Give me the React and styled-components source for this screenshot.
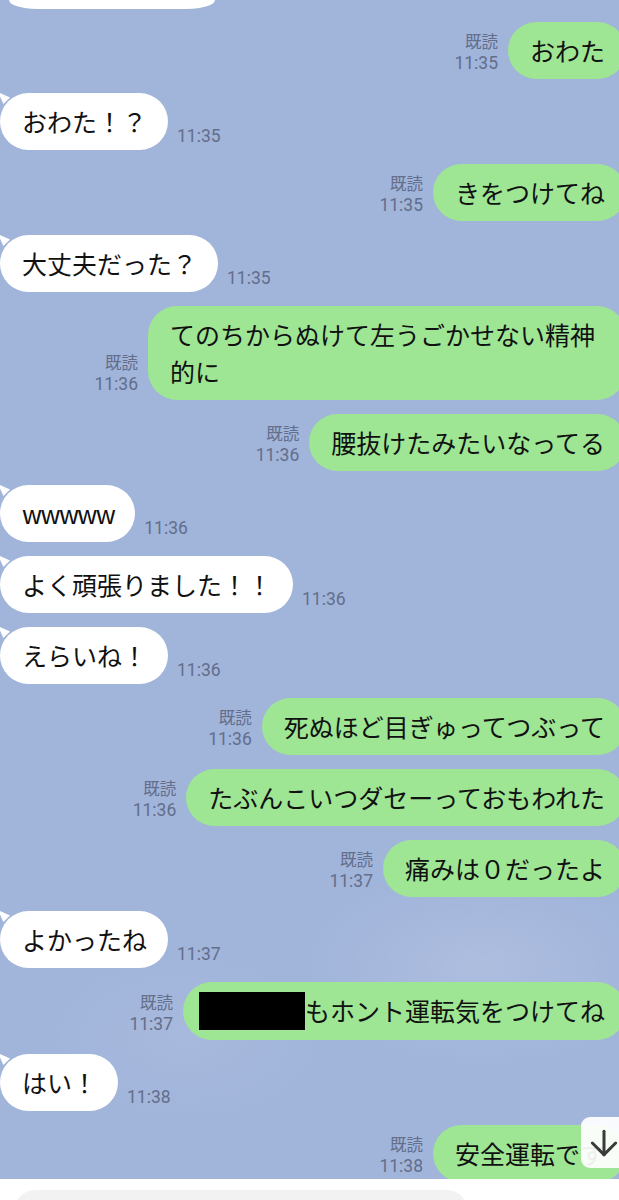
import styled, { createGlobalStyle } from "styled-components";
import { ArrowDown } from "lucide-react";

const GlobalStyle = createGlobalStyle`
  body {
    margin: 0;
    overflow: hidden;
    font-family: "Noto Sans CJK JP", "Noto Sans", sans-serif;
  }
`

const Page = styled.div`
  width: 619px;
  height: 1200px;
  display: flex;
  flex-direction: column;
  background: #fff;
  position: relative;
  overflow: hidden;
`

const Chat = styled.div`
  height: 1179px;
  flex-shrink: 0;
  overflow: hidden;
  background:
    radial-gradient(ellipse 260px 140px at 78% 82%, rgba(255, 255, 255, 0.13), transparent 70%),
    radial-gradient(ellipse 200px 120px at 30% 88%, rgba(255, 255, 255, 0.07), transparent 70%),
    #a1b4da;
  display: flex;
  flex-direction: column;
  gap: 13px;
`

const Stub = styled.div`
  height: 9px;
  width: 206px;
  margin-left: 9px;
  flex-shrink: 0;
  background: #fff;
  border-radius: 0 0 28px 28px / 0 0 9px 9px;
`

const List = styled.div`
  display: flex;
  flex-direction: column;
  gap: 14px;
`

const Row = styled.div`
  display: flex;
  align-items: flex-end;
  justify-content: ${p => (p.$side === "right" ? "flex-end" : "flex-start")};
  gap: ${p => (p.$side === "right" ? "10px" : "9px")};
`

const Bubble = styled.div`
  position: relative;
  flex-shrink: 0;
  max-width: 478px;
  box-sizing: border-box;
  padding: 10px 21px 10px 22px;
  margin-right: ${p => (p.$side === "right" ? "-7px" : "0")};
  background: ${p => (p.$side === "right" ? "#9ee594" : "#ffffff")};
  border-radius: 29px;
  color: #111;
  font-size: 25px;
  line-height: 37px;
  letter-spacing: ${p => (p.$tight ? "-1.6px" : "0")};

  ${p =>
    p.$side === "left" &&
    `
    &::before {
      content: "";
      position: absolute;
      left: -2px;
      top: -1px;
      width: 12px;
      height: 12px;
      background: #fff;
      clip-path: polygon(0 0, 100% 45%, 45% 100%);
    }
  `}
`

const Meta = styled.div`
  display: flex;
  flex-direction: column;
  align-items: ${p => (p.$side === "right" ? "flex-end" : "flex-start")};
  padding-bottom: ${p => (p.$side === "right" ? "5px" : "3px")};
  color: #636e8b;
  font-size: 17.5px;
  line-height: 22px;
`

const Read = styled.span`
  font-family: "Noto Sans CJK JP", sans-serif;
  font-size: 16.5px;
`

const Time = styled.span`
  font-family: Roboto, "Liberation Sans", sans-serif;
`

const Redacted = styled.span`
  display: inline-block;
  width: 106px;
  height: 38px;
  margin-left: -6px;
  vertical-align: -9px;
  background: #000;
`

const ScrollButton = styled.div`
  position: absolute;
  left: 581px;
  top: 1117px;
  width: 48px;
  height: 51px;
  border-radius: 9px;
  background: rgba(255, 255, 255, 0.93);
  display: flex;
  align-items: center;
  justify-content: center;
  color: #3a3a3a;
  box-sizing: border-box;
  padding-right: 2px;
`

const Footer = styled.div`
  flex: 1;
  background: #fff;
  padding: 11px 0 0 15px;
`

const InputBox = styled.div`
  width: 452px;
  height: 40px;
  background: #f2f2f2;
  border-radius: 20px;
`

const messages = [
  { side: "right", text: "おわた", time: "11:35" },
  { side: "left", text: "おわた！？", time: "11:35" },
  { side: "right", text: "きをつけてね", time: "11:35" },
  { side: "left", text: "大丈夫だった？", time: "11:35" },
  { side: "right", text: "てのちからぬけて左うごかせない精神的に", time: "11:36" },
  { side: "right", text: "腰抜けたみたいなってる", time: "11:36" },
  { side: "left", text: "wwwww", time: "11:36", tight: true },
  { side: "left", text: "よく頑張りました！！", time: "11:36" },
  { side: "left", text: "えらいね！", time: "11:36" },
  { side: "right", text: "死ぬほど目ぎゅってつぶって", time: "11:36" },
  { side: "right", text: "たぶんこいつダセーっておもわれた", time: "11:36" },
  { side: "right", text: "痛みは０だったよ", time: "11:37" },
  { side: "left", text: "よかったね", time: "11:37" },
  { side: "right", text: "もホント運転気をつけてね", time: "11:37", redacted: true },
  { side: "left", text: "はい！", time: "11:38" },
  { side: "right", text: "安全運転です", time: "11:38" },
]

const Message = ({ msg }) => {
  const bubble = (
    <Bubble $side={msg.side} $tight={msg.tight}>
      {msg.redacted && <Redacted />}
      {msg.text}
    </Bubble>
  )
  if (msg.side === "right") {
    return (
      <Row $side="right">
        <Meta $side="right">
          <Read>既読</Read>
          <Time>{msg.time}</Time>
        </Meta>
        {bubble}
      </Row>
    )
  }
  return (
    <Row $side="left">
      {bubble}
      <Meta $side="left">
        <Time>{msg.time}</Time>
      </Meta>
    </Row>
  )
}

export default function App() {
  return (
    <Page>
      <GlobalStyle />
      <Chat>
        <Stub />
        <List>
          {messages.map((m, i) => (
            <Message key={i} msg={m} />
          ))}
        </List>
      </Chat>
      <Footer>
        <InputBox />
      </Footer>
      <ScrollButton>
        <ArrowDown size={40} strokeWidth={1.8} />
      </ScrollButton>
    </Page>
  )
}
